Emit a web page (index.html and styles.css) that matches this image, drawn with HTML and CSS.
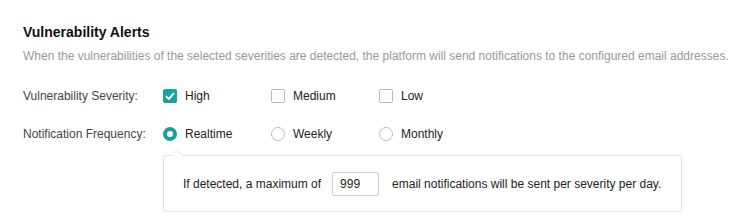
FILE: index.html
```html
<!DOCTYPE html>
<html lang="en">
<head>
  <meta charset="UTF-8" />
  <title>Vulnerability Alerts</title>
  <link rel="stylesheet" href="styles.css">
</head>
<body>
  <div class="section">
    <h3 class="title">Vulnerability Alerts</h3>
    <p class="desc">When the vulnerabilities of the selected severities are detected, the platform will send notifications to the configured email addresses.</p>

    <div class="row">
      <span class="row-label">Vulnerability Severity:</span>
      <div class="options">
        <label class="option">
          <span class="check checked">
            <svg width="10" height="8" viewBox="0 0 10 8"><path d="M1 4.2 L3.8 7 L9 1.2" fill="none" stroke="#fff" stroke-width="2"/></svg>
          </span>High
        </label>
        <label class="option"><span class="check"></span>Medium</label>
        <label class="option"><span class="check"></span>Low</label>
      </div>
    </div>

    <div class="row">
      <span class="row-label">Notification Frequency:</span>
      <div class="options">
        <label class="option"><span class="radio checked"></span>Realtime</label>
        <label class="option"><span class="radio"></span>Weekly</label>
        <label class="option"><span class="radio"></span>Monthly</label>
      </div>
    </div>

    <div class="popover">
      <span>If detected, a maximum of</span>
      <span class="num-input">999</span>
      <span>email notifications will be sent per severity per day.</span>
    </div>
  </div>
</body>
</html>
```

FILE: styles.css
```css
body {
  margin: 0;
  background: #ffffff;
  font-family: 'Liberation Sans', Arial, sans-serif;
  font-size: 12px;
  color: #333;
}

.section {
  padding: 22px 23px 0;
}

.title {
  margin: 0;
  font-size: 14px;
  line-height: 20px;
  font-weight: bold;
  color: #111;
}

.desc {
  margin: 4px 0 0;
  line-height: 20px;
  white-space: nowrap;
  color: #999;
}

.row {
  display: flex;
  align-items: center;
  height: 20px;
  margin-top: 20px;
}

.row + .row {
  margin-top: 18px;
}

.row-label {
  width: 140px;
  color: #444;
}

.options {
  display: flex;
}

.option {
  display: flex;
  align-items: center;
  width: 108px;
  color: #222;
}

.check,
.radio {
  width: 12px;
  height: 12px;
  border: 1px solid #bbb;
  background: #fff;
  margin-right: 8px;
  display: flex;
  align-items: center;
  justify-content: center;
}

.check {
  border-radius: 2px;
}

.check.checked {
  background: #14a3a3;
  border-color: #14a3a3;
}

.radio {
  border-radius: 50%;
}

.radio.checked {
  width: 6px;
  height: 6px;
  border: 4px solid #14a3a3;
}

.popover {
  position: relative;
  display: flex;
  align-items: center;
  width: 479px;
  margin: 11px 0 0 140px;
  padding: 16px 19px 15px;
  border: 1px solid #e2e2e2;
  border-radius: 3px;
  box-shadow: 0 1px 3px rgba(0, 0, 0, 0.06);
  color: #222;
}

.popover::before,
.popover::after {
  content: "";
  position: absolute;
  left: 7px;
  top: -7px;
  border: 6px solid transparent;
  border-top: 0;
  border-bottom: 7px solid #e2e2e2;
}

.popover::after {
  top: -6px;
  border-bottom-color: #fff;
}

.num-input {
  box-sizing: border-box;
  width: 47px;
  height: 24px;
  line-height: 22px;
  margin: 0 13px 0 11px;
  padding: 0 7px;
  border: 1px solid #ccc;
  border-radius: 2px;
  color: #222;
}
```
